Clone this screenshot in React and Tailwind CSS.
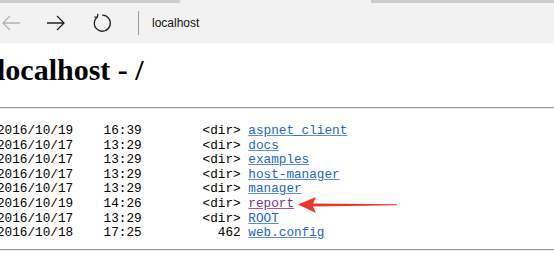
import React from "react";

function App() {
  const rows = [
    { date: "2016/10/19", time: "16:39", size: "<dir>", name: "aspnet_client" },
    { date: "2016/10/17", time: "13:29", size: "<dir>", name: "docs" },
    { date: "2016/10/17", time: "13:29", size: "<dir>", name: "examples" },
    { date: "2016/10/17", time: "13:29", size: "<dir>", name: "host-manager" },
    { date: "2016/10/17", time: "13:29", size: "<dir>", name: "manager" },
    { date: "2016/10/19", time: "14:26", size: "<dir>", name: "report", visited: true },
    { date: "2016/10/17", time: "13:29", size: "<dir>", name: "ROOT" },
    { date: "2016/10/18", time: "17:25", size: "462", name: "web.config" },
  ];

  return (
    <div className="relative w-[554px] h-[277px] overflow-hidden bg-white">
      {/* Browser bar */}
      <div className="h-[43px] bg-[#f2f2f2] flex flex-col">
        <div className="flex h-[3px]">
          <div className="w-[180px] bg-[#cdcdcd]"></div>
          <div className="flex-1"></div>
          <div className="w-[183px] bg-[#cdcdcd]"></div>
        </div>
        <div className="flex items-center h-[40px]">
          <svg width="20" height="16" viewBox="0 0 20 16" className="ml-[1px]" fill="none" stroke="#b4b4b4" strokeWidth="1.3">
            <path d="M19 8H2M9 1L2 8l7 7" />
          </svg>
          <svg width="20" height="16" viewBox="0 0 20 16" className="ml-[25px]" fill="none" stroke="#222" strokeWidth="1.3">
            <path d="M1 8h17M11 1l7 7-7 7" />
          </svg>
          <svg width="20" height="20" viewBox="0 0 20 20" className="ml-[26px]" fill="none" stroke="#222" strokeWidth="1.3">
            <path d="M10.2 2.2A8 8 0 1 1 5.4 3.9" />
            <path d="M5.4 3.9L5.9 0.9M5.4 3.9L2.3 4.2" />
          </svg>
          <div className="ml-[26px] w-px h-[24px] bg-[#9a9a9a]"></div>
          <span className="ml-[13px] text-[12px] text-[#111] font-['Liberation_Sans',sans-serif]">localhost</span>
        </div>
      </div>

      {/* Page */}
      <div className="ml-[-3px] pt-[10px] text-black">
        <h1 className="text-[30px] leading-[34px] font-bold font-['Liberation_Serif',serif]">localhost - /</h1>
        <hr className="mt-[20px] border-t border-b border-t-[#9a9a9a] border-b-[#e6e6e6]" />
        <pre className="mt-[15px] text-[12.7px] leading-[14.6px] font-['Liberation_Mono',monospace]">
          {rows.map((r) => (
            <div key={r.name}>
              {r.date}{"    "}{r.time}{"        "}{r.size.padStart(5, " ")}{" "}
              <a
                href="#"
                className={
                  r.visited
                    ? "text-[#7d2d8c] underline decoration-[#a05aa8]"
                    : "text-[#2566c0] underline decoration-[#5b8fd6]"
                }
              >
                {r.name}
              </a>
            </div>
          ))}
        </pre>
        <hr className="mt-[8px] border-t border-b border-t-[#9a9a9a] border-b-[#e6e6e6]" />
      </div>

      {/* Red annotation arrow */}
      <svg className="absolute left-[298px] top-[196px]" width="100" height="18" viewBox="0 0 100 18">
        <polygon points="0,8.5 18,1 15,7.4 99,8.3 99,9.2 15,10.4 18,17" fill="#e8362b" />
      </svg>
    </div>
  );
}

export default App;
